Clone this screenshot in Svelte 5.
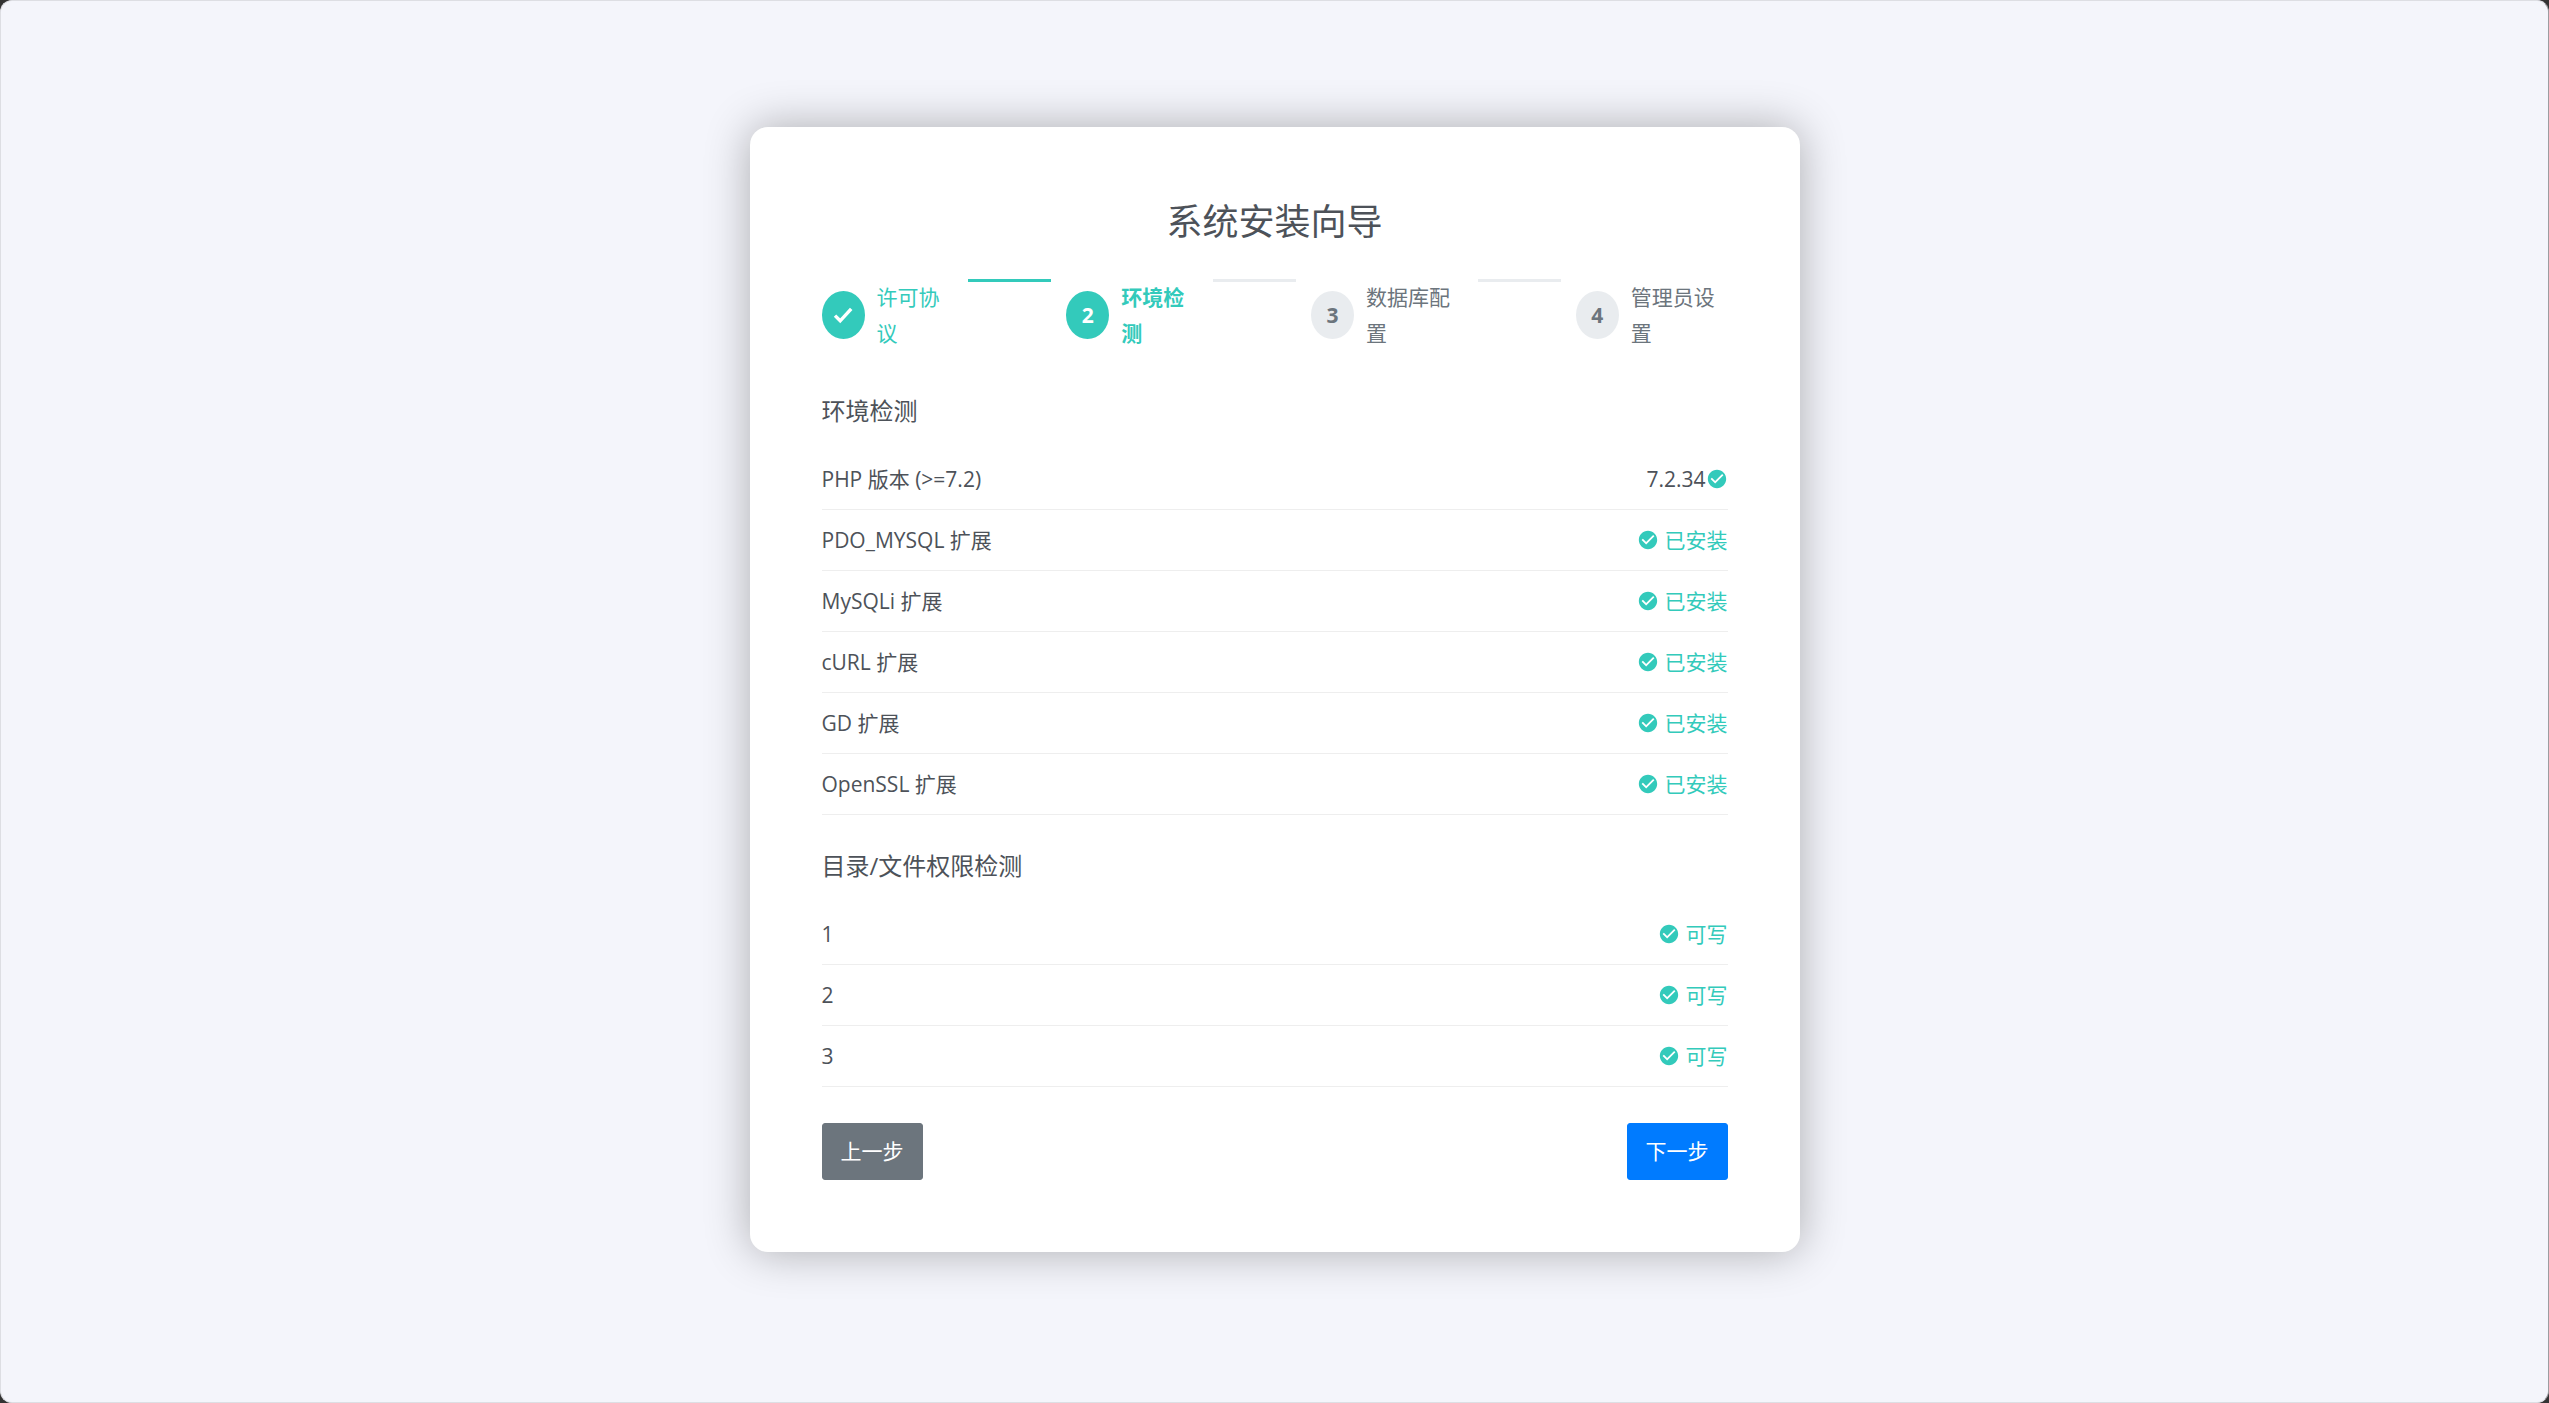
<script>
  const steps = [
    { label: '许可协议', state: 'done' },
    { label: '环境检测', state: 'active' },
    { label: '数据库配置', state: 'todo' },
    { label: '管理员设置', state: 'todo' },
  ];
  const environment = [
    { name: 'PHP 版本 (>=7.2)', value: '7.2.34' },
    { name: 'PDO_MYSQL 扩展', status: '已安装' },
    { name: 'MySQLi 扩展', status: '已安装' },
    { name: 'cURL 扩展', status: '已安装' },
    { name: 'GD 扩展', status: '已安装' },
    { name: 'OpenSSL 扩展', status: '已安装' },
  ];
  const folders = [
    { name: '1', status: '可写' },
    { name: '2', status: '可写' },
    { name: '3', status: '可写' },
  ];
</script>

{#snippet badge()}
  <svg class="badge" viewBox="0 0 24 24" aria-hidden="true">
    <path d="M12 2C6.5 2 2 6.5 2 12S6.5 22 12 22 22 17.5 22 12 17.5 2 12 2M10 17L5 12L6.41 10.59L10 14.17L17.59 6.58L19 8L10 17Z" />
  </svg>
{/snippet}

{#snippet checks(id, title, rows)}
  <section aria-labelledby={id}>
    <h2 {id}>{title}</h2>
    <table aria-labelledby={id}>
      <tbody>
        {#each rows as row}
          <tr>
            <th scope="row">{row.name}</th>
            <td>
              {#if row.status}
                <span class="result ok">{@render badge()}<span>{row.status}</span></span>
              {:else}
                <span class="result tight"><span>{row.value}</span>{@render badge()}</span>
              {/if}
            </td>
          </tr>
        {/each}
      </tbody>
    </table>
  </section>
{/snippet}

<div class="window">
  <main class="card">
    <h1>系统安装向导</h1>

    <ol class="steps">
      {#each steps as step, i}
        <li class="step {step.state}" aria-current={step.state === 'active' ? 'step' : undefined}>
          <span class="circle">
            {#if step.state === 'done'}
              <svg viewBox="0 0 24 24" aria-hidden="true">
                <path d="M4 12.6L9.2 17.8L20.2 5.8" />
              </svg>
            {:else}
              {i + 1}
            {/if}
          </span>
          <span class="label">{step.label}</span>
        </li>
        {#if i < steps.length - 1}
          <li class="line" class:filled={step.state === 'done'} aria-hidden="true"></li>
        {/if}
      {/each}
    </ol>

    {@render checks('environment', '环境检测', environment)}
    {@render checks('folders', '目录/文件权限检测', folders)}

    <div class="actions">
      <button type="button" class="prev">上一步</button>
      <button type="button" class="next">下一步</button>
    </div>
  </main>
</div>

<style>
  :global(body) {
    margin: 0;
    background: #333;
  }

  .window {
    box-sizing: border-box;
    min-height: 100vh;
    padding: 24px 24px 48px;
    display: flex;
    align-items: center;
    justify-content: center;
    background: #f4f5fb;
    border: 1px solid #dddee3;
    border-right-color: #9c9ca0;
    border-radius: 12px;
    color: #4d5259;
    font: 21px/36px 'Open Sans', 'Noto Sans CJK SC', sans-serif;
  }

  .card {
    box-sizing: border-box;
    width: 100%;
    max-width: 1050px;
    padding: 72px;
    background: #fff;
    border-radius: 18px;
    box-shadow: 0 0 45px rgba(0, 0, 0, 0.3);
  }

  h1 {
    margin: 0 0 34px;
    font-size: 36px;
    line-height: 46px;
    font-weight: 400;
    text-align: center;
  }

  .steps {
    display: flex;
    margin: 0 0 45px;
    padding: 0;
    list-style: none;
  }

  .step {
    display: flex;
    align-items: center;
    flex: 0 1 auto;
    min-width: 0;
    color: #6c757d;
  }

  .step.done,
  .step.active {
    color: #33cabb;
  }

  .step.active {
    font-weight: 700;
  }

  .circle {
    display: flex;
    align-items: center;
    justify-content: center;
    flex: none;
    width: 43px;
    height: 48px;
    margin-right: 12px;
    border-radius: 50%;
    background: #e9ecef;
    font-weight: 700;
  }

  .done .circle,
  .active .circle {
    background: #33cabb;
    color: #fff;
  }

  .circle svg {
    width: 24px;
    height: 24px;
    fill: none;
    stroke: currentColor;
    stroke-width: 3.4;
  }

  .line {
    flex: none;
    width: 83px;
    height: 3px;
    margin: 0 15px;
    background: #e9ecef;
  }

  .line.filled {
    background: #33cabb;
  }

  section {
    margin-bottom: 36px;
  }

  h2 {
    margin: 0 0 24px;
    font-size: 24px;
    line-height: 29px;
    font-weight: 400;
  }

  table {
    width: 100%;
    border-collapse: separate;
    border-spacing: 0;
  }

  th,
  td {
    padding: 12px 0;
    border-bottom: 1px solid #eee;
    font-weight: 400;
    text-align: left;
  }

  .result {
    display: flex;
    align-items: center;
    justify-content: flex-end;
    gap: 6px;
  }

  .result.tight {
    gap: 0;
  }

  .ok {
    color: #33cabb;
  }

  .badge {
    width: 22px;
    height: 22px;
    fill: #33cabb;
  }

  .actions {
    display: flex;
    justify-content: space-between;
  }

  button {
    padding: 10px 18px;
    border: 1px solid transparent;
    border-radius: 3px;
    color: #fff;
    font: inherit;
    line-height: 35px;
    cursor: pointer;
  }

  .prev {
    background: #6c757d;
    border-color: #6c757d;
  }

  .next {
    background: #007bff;
    border-color: #007bff;
  }
</style>
